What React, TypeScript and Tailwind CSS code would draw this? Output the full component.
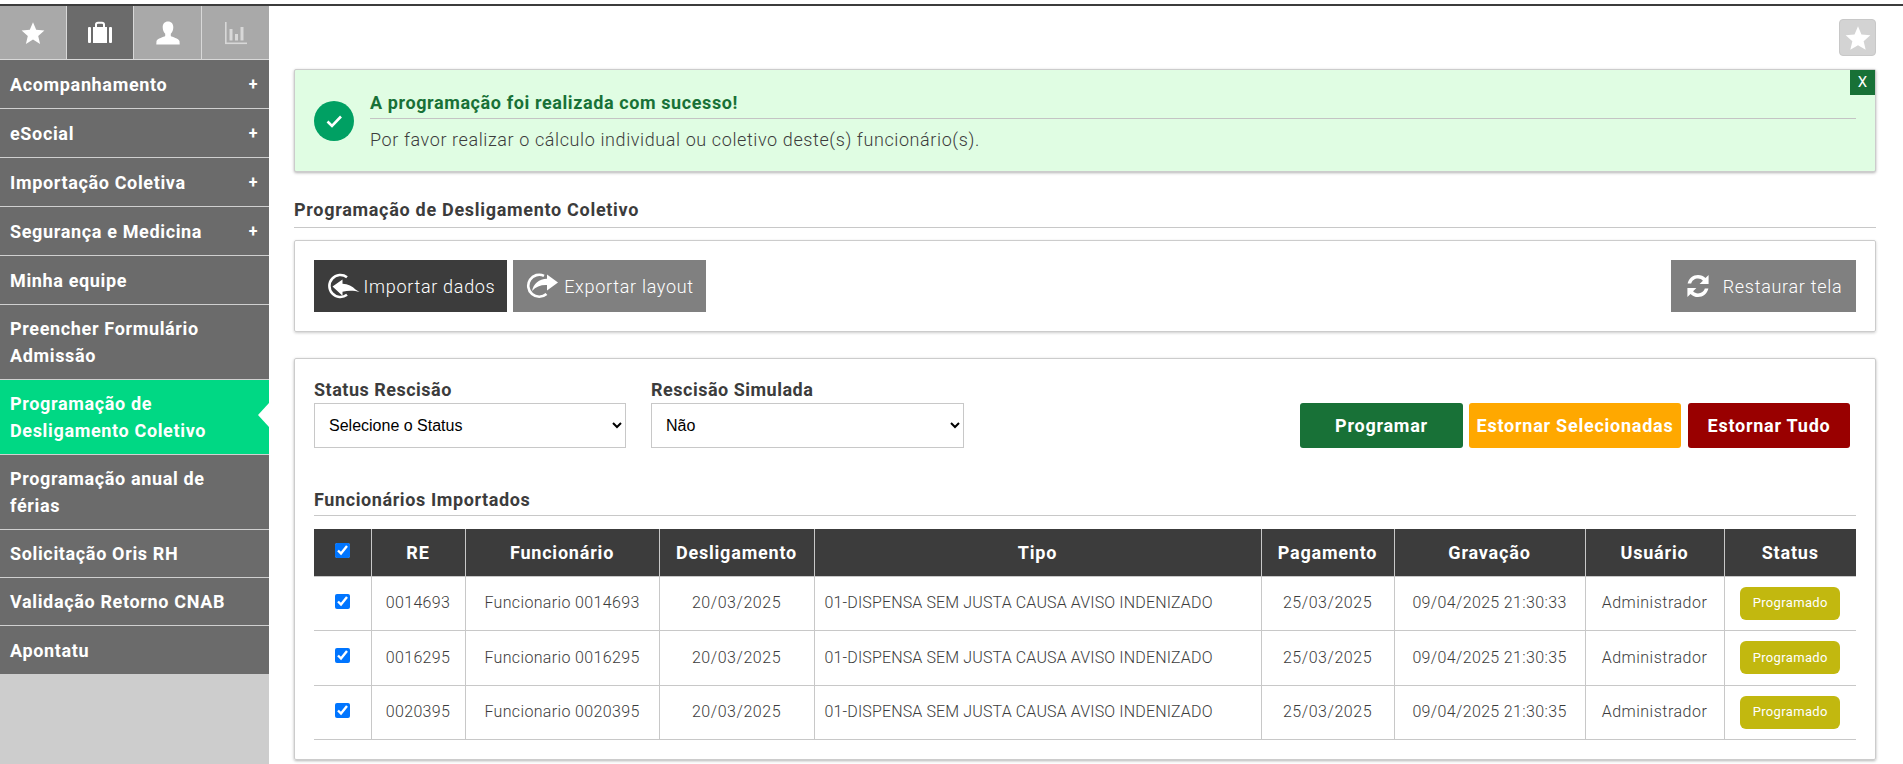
import React from "react";

const font = { fontFamily: "Roboto, 'Liberation Sans', sans-serif" };

function Star({ size, cls }: { size: number; cls?: string }) {
  return (
    <svg width={size} height={size} viewBox="0 0 24 24" className={cls} fill="currentColor">
      <path d="M12 1.2l3.2 7.6 8.2.7-6.2 5.4 1.9 8-7.1-4.3-7.1 4.3 1.9-8L.6 9.5l8.2-.7z" />
    </svg>
  );
}
function Case() {
  return (
    <svg width="24" height="24" viewBox="0 0 24 24" fill="currentColor">
      <rect x="0" y="6" width="3" height="16" rx="1" />
      <path d="M5 6h2V3.5C7 1.8 8.2.8 10 .8h4c1.8 0 3 1 3 2.7V6h2v16H5zM9 6h6V3.6c0-.6-.4-.9-1-.9h-4c-.6 0-1 .3-1 .9z" fillRule="evenodd" />
      <rect x="21" y="6" width="3" height="16" rx="1" />
    </svg>
  );
}
function User() {
  return (
    <svg width="24" height="24" viewBox="0 0 24 24" fill="currentColor">
      <path d="M12 .5c3.4 0 5.3 2.4 5.3 5.8 0 2.6-1 5-2.5 6.4v2.2c1 1 8.2 2.4 8.7 5.2l.2 3.4H.3l.2-3.4c.5-2.8 7.700-4.200 8.700-5.200v-2.200C7.700 11.300 6.700 8.900 6.700 6.300 6.700 2.900 8.600.500 12 .5z" />
    </svg>
  );
}
function Chart() {
  return (
    <svg width="22" height="24" viewBox="0 0 22 24" fill="currentColor">
      <rect x="0" y="1" width="1.600" height="22" />
      <rect x="0" y="21.500" width="22" height="1.600" />
      <rect x="4.500" y="8" width="3" height="11.500" />
      <rect x="10" y="13" width="3" height="6.500" />
      <rect x="15.500" y="6" width="3" height="13.500" />
    </svg>
  );
}
function ImportIcon() {
  return (
    <svg width="34" height="26" viewBox="0 0 34 26" fill="none">
      <path d="M21 4.200A11 11 0 1 0 21 21.800" stroke="currentColor" strokeWidth="2.600" />
      <path d="M6.500 13.500L16.500 6.500v4.300c5.500.3 10 2.500 13 5.700l4 2.500c-5-1.500-11-1.800-17-.3v4z" fill="currentColor" />
    </svg>
  );
}
function ExportIcon() {
  return (
    <svg width="34" height="26" viewBox="0 0 34 26" fill="none">
      <path d="M19 2.800A11 11 0 1 0 21.500 21" stroke="currentColor" strokeWidth="2.600" />
      <path d="M33 9.500L22 1.500v4.200C14 6 8.500 10.500 7 18c4-4.500 9-6.300 15-6v5.500z" fill="currentColor" />
    </svg>
  );
}
function Sync() {
  return (
    <svg width="26" height="26" viewBox="0 0 26 26" fill="currentColor">
      <path d="M2.600 10.500C3.800 5.400 8 2 13 2c3 0 5.500 1.200 7.500 3.100L23.600 2v9h-9l3.300-3.300C16.700 6.400 15 5.600 13 5.600c-3.300 0-6 2.100-6.800 4.900z" />
      <path d="M23.400 15.500C22.200 20.600 18 24 13 24c-3 0-5.500-1.200-7.500-3.100L2.400 24v-9h9l-3.300 3.300c1.200 1.300 2.900 2.100 4.900 2.100 3.300 0 6-2.100 6.800-4.900z" />
    </svg>
  );
}

function MenuItem({ label, plus, active, h }: { label: React.ReactNode; plus?: boolean; active?: boolean; h: string }) {
  return (
    <div
      className={`relative flex items-center justify-between border-b border-[#d0d0d0] pl-[10px] pr-[11px] text-[18px] font-bold leading-[27px] tracking-[0.65px] text-white ${h} ${
        active ? "bg-[#00d884]" : "bg-[#6b6b6b]"
      }`}
    >
      <span>{label}</span>
      {plus && <span className="text-[16px] font-bold">+</span>}
      {active && (
        <span className="absolute right-0 top-[23px] h-0 w-0 border-y-[12px] border-r-[11px] border-y-transparent border-r-white" />
      )}
    </div>
  );
}

function Tab({ children, active, w }: { children: React.ReactNode; active?: boolean; w: string }) {
  return (
    <div
      className={`flex h-[53px] items-center justify-center border-r border-[#d8d8d8] text-white ${w} ${
        active ? "bg-[#6b6b6b]" : "bg-[#a9a9a9]"
      }`}
    >
      {children}
    </div>
  );
}

const heads = ["RE", "Funcionário", "Desligamento", "Tipo", "Pagamento", "Gravação", "Usuário", "Status"];
const rows = [
  ["0014693", "33", "h-[54px]"],
  ["0016295", "35", "h-[55px]"],
  ["0020395", "35", "h-[54px]"],
];

function Checkbox() {
  return <input type="checkbox" readOnly checked className="h-[15px] w-[15px] accent-[#0075ff]" />;
}

export default function App() {
  return (
    <div style={font} className="h-[764px] w-[1903px] overflow-hidden bg-white pt-1">
      <div className="flex h-[760px] border-t-2 border-[#3c3c3c]">
        <aside className="w-[269px] shrink-0 bg-[#cdcdcd]">
          <div className="flex border-b border-[#d8d8d8]">
            <Tab w="w-[67px]"><Star size={24} /></Tab>
            <Tab w="w-[67px]" active><Case /></Tab>
            <Tab w="w-[68px]"><User /></Tab>
            <div className="flex h-[53px] w-[67px] items-center justify-center bg-[#a9a9a9] text-[#d8d8d8]"><Chart /></div>
          </div>
          <MenuItem h="h-[49px]" label="Acompanhamento" plus />
          <MenuItem h="h-[49px]" label="eSocial" plus />
          <MenuItem h="h-[49px]" label="Importação Coletiva" plus />
          <MenuItem h="h-[49px]" label="Segurança e Medicina" plus />
          <MenuItem h="h-[49px]" label="Minha equipe" />
          <MenuItem h="h-[75px]" label={<>Preencher Formulário<br />Admissão</>} />
          <MenuItem h="h-[75px]" label={<>Programação de<br />Desligamento Coletivo</>} active />
          <MenuItem h="h-[75px]" label={<>Programação anual de<br />férias</>} />
          <MenuItem h="h-[48px]" label="Solicitação Oris RH" />
          <MenuItem h="h-[48px]" label="Validação Retorno CNAB" />
          <div className="flex h-[48px] items-center bg-[#6b6b6b] pl-[10px] text-[18px] font-bold leading-[27px] tracking-[0.65px] text-white">Apontatu</div>
        </aside>

        <main className="w-[1607px] pl-[25px] pr-0 text-[#3c3c3c]">
          <div className="flex justify-end pt-[13px]">
            <div className="flex h-[37px] w-[37px] items-center justify-center rounded-[4px] border border-[#c8c8c8] bg-[#d3d3d3] text-white">
              <Star size={26} />
            </div>
          </div>

          <section className="relative mt-[13px] flex h-[103px] items-center rounded-[2px] border border-[#ccc] bg-[#e0fde3] pl-[19px] pr-[19px] shadow-[0_1px_3px_rgba(0,0,0,0.3)]">
            <div className="flex h-10 w-10 shrink-0 items-center justify-center rounded-full bg-[#00a063] text-white">
              <svg width="20" height="20" viewBox="0 0 20 20" fill="none" stroke="currentColor" strokeWidth="2.600">
                <path d="M3.500 10.500l4.500 4.500 9-9.500" />
              </svg>
            </div>
            <div className="ml-[16px] flex-1">
              <div className="border-b border-[#c4c4c4] pb-[2px] text-[18px] font-bold leading-[27px] tracking-[0.6px] text-[#187137]">
                A programação foi realizada com sucesso!
              </div>
              <div className="pt-[7px] text-[18px] font-light leading-[27px] tracking-[0.6px]">
                Por favor realizar o cálculo individual ou coletivo deste(s) funcionário(s).
              </div>
            </div>
            <div className="absolute right-0 top-0 flex h-[25px] w-[25px] items-center justify-center bg-[#187137] text-[15px] text-white">X</div>
          </section>

          <h2 className="mt-[24px] border-b border-[#c8c8c8] pb-[4px] text-[18px] font-bold leading-[27px] tracking-[0.7px]">
            Programação de Desligamento Coletivo
          </h2>

          <section className="mt-[12px] flex h-[92px] items-center justify-between rounded-[2px] border border-[#ccc] px-[19px] shadow-[0_1px_3px_rgba(0,0,0,0.2)]">
            <div className="flex gap-[6px]">
              <div className="flex h-[52px] w-[193px] items-center justify-center gap-[4px] bg-[#3c3c3c] text-[18px] font-light tracking-[0.7px] text-white">
                <ImportIcon />Importar dados
              </div>
              <div className="flex h-[52px] w-[193px] items-center justify-center gap-[5px] bg-[#808080] text-[18px] font-light tracking-[0.7px] text-white">
                <ExportIcon />Exportar layout
              </div>
            </div>
            <div className="flex h-[52px] w-[185px] items-center justify-center gap-[12px] bg-[#808080] text-[18px] font-light tracking-[0.7px] text-white">
              <Sync />Restaurar tela
            </div>
          </section>

          <section className="mt-[26px] h-[402px] rounded-[2px] border border-[#ccc] px-[19px] pt-[18px] shadow-[0_1px_3px_rgba(0,0,0,0.3)]">
            <div className="flex items-end justify-between">
              <div className="flex gap-[25px]">
                <label className="block w-[312px]">
                  <span className="block text-[18px] font-bold leading-[26px] tracking-[0.5px]">Status Rescisão</span>
                  <select
                    style={{ fontFamily: "'Liberation Sans', Arial, sans-serif" }}
                    className="h-[45px] w-full border border-[#c8c8c8] bg-white px-[10px] text-[16px] text-black"
                  >
                    <option>Selecione o Status</option>
                  </select>
                </label>
                <label className="block w-[313px]">
                  <span className="block text-[18px] font-bold leading-[26px] tracking-[0.5px]">Rescisão Simulada</span>
                  <select
                    style={{ fontFamily: "'Liberation Sans', Arial, sans-serif" }}
                    className="h-[45px] w-full border border-[#c8c8c8] bg-white px-[10px] text-[16px] text-black"
                  >
                    <option>Não</option>
                  </select>
                </label>
              </div>
              <div className="mr-[6px] flex gap-[6px] text-[18px] font-bold tracking-[0.75px] text-white">
                <div className="flex h-[45px] w-[163px] items-center justify-center rounded-[3px] bg-[#187137]">Programar</div>
                <div className="flex h-[45px] w-[212px] items-center justify-center rounded-[3px] bg-[#ffa800]">Estornar Selecionadas</div>
                <div className="ml-[1px] flex h-[45px] w-[162px] items-center justify-center rounded-[3px] bg-[#990000]">Estornar Tudo</div>
              </div>
            </div>

            <h3 className="mt-[39px] border-b border-[#c8c8c8] pb-[2px] text-[18px] font-bold leading-[26px] tracking-[0.6px]">
              Funcionários Importados
            </h3>

            <table className="mt-[13px] w-[1542px] table-fixed border-collapse text-center text-[16px] font-light tracking-[0.35px]">
              <colgroup>
                <col className="w-[57px]" />
                <col className="w-[94px]" />
                <col className="w-[194px]" />
                <col className="w-[155px]" />
                <col className="w-[447px]" />
                <col className="w-[133px]" />
                <col className="w-[191px]" />
                <col className="w-[139px]" />
                <col className="w-[132px]" />
              </colgroup>
              <thead>
                <tr className="h-[47px] bg-[#3c3c3c] text-[18px] font-bold tracking-[0.8px] text-white">
                  <th className="border-r border-b border-[#c8c8c8]">
                    <div className="-mt-1 flex justify-center"><Checkbox /></div>
                  </th>
                  {heads.map((h) => (
                    <th key={h} className="border-r border-b border-[#c8c8c8] font-bold last:border-r-0">{h}</th>
                  ))}
                </tr>
              </thead>
              <tbody>
                {rows.map(([id, sec, height]) => (
                  <tr key={id} className={`${height} border-b border-[#c8c8c8]`}>
                    <td className="border-r border-[#c8c8c8]">
                      <div className="-mt-1 flex justify-center"><Checkbox /></div>
                    </td>
                    <td className="border-r border-[#c8c8c8]">{id}</td>
                    <td className="border-r border-[#c8c8c8]">Funcionario {id}</td>
                    <td className="border-r border-[#c8c8c8] tracking-[0.55px]">20/03/2025</td>
                    <td className="border-r border-[#c8c8c8] pl-[10px] text-left tracking-[0.14px]">01-DISPENSA SEM JUSTA CAUSA AVISO INDENIZADO</td>
                    <td className="border-r border-[#c8c8c8] tracking-[0.55px]">25/03/2025</td>
                    <td className="border-r border-[#c8c8c8]">09/04/2025 21:30:{sec}</td>
                    <td className="border-r border-[#c8c8c8] tracking-[0.5px]">Administrador</td>
                    <td>
                      <div className="mx-auto flex h-[33px] w-[100px] items-center justify-center rounded-[6px] bg-[#c2b80f] text-[13px] font-normal text-white">
                        Programado
                      </div>
                    </td>
                  </tr>
                ))}
              </tbody>
            </table>
          </section>
        </main>
      </div>
    </div>
  );
}
